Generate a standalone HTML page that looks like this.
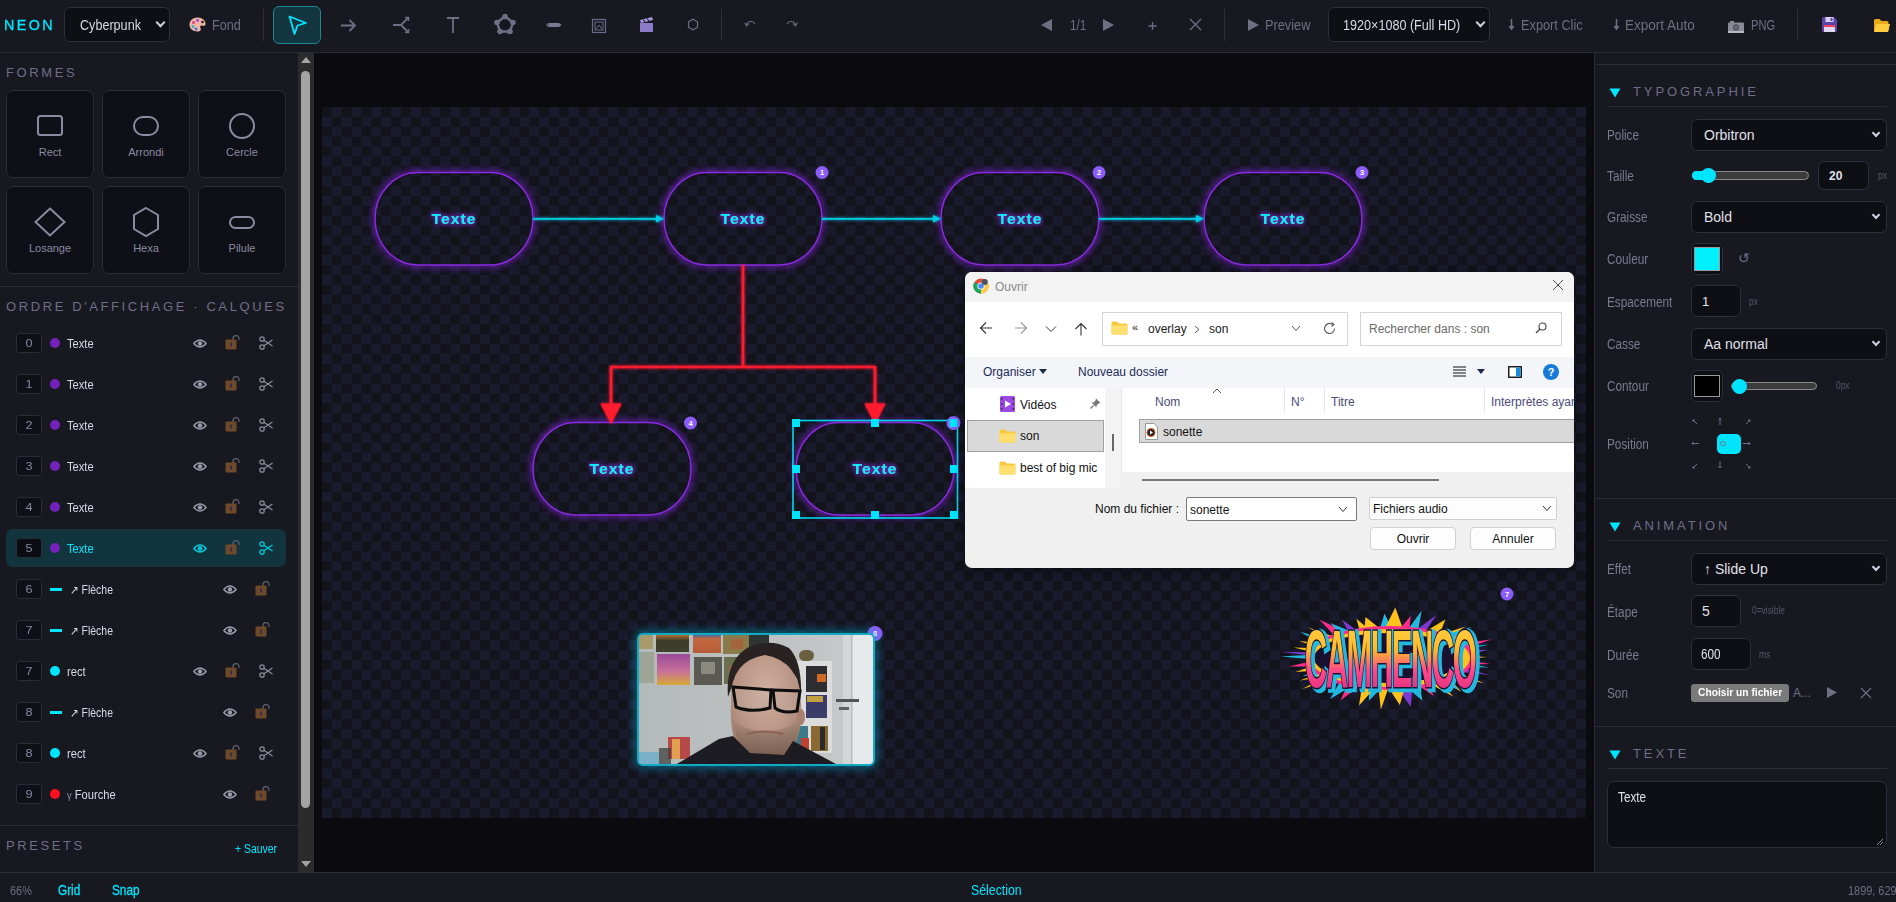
<!DOCTYPE html>
<html><head><meta charset="utf-8">
<style>
*{box-sizing:border-box;margin:0;padding:0}
html,body{width:1896px;height:902px;overflow:hidden;background:#17171f;font-family:"Liberation Sans",sans-serif;color:#c8c8d8}
.a{position:absolute}
svg{display:block}
#top{left:0;top:0;width:1896px;height:53px;background:#181820;border-bottom:1px solid #2a2a38}
.sep{position:absolute;width:1px;background:#2e2e3c}
.sel{position:absolute;background:#0e0e15;border:1px solid #2e2e3e;border-radius:6px}
.chev{position:absolute;width:7px;height:7px;border-right:2px solid #d0d0e0;border-bottom:2px solid #d0d0e0;transform:rotate(45deg)}
.t{position:absolute;white-space:nowrap;line-height:1}
.gray{color:#6e6e84}
.c2{transform:scaleX(1.0);transform-origin:left top}
.c3{display:inline-block;transform:scaleX(1.15);font-size:11px}
.c4{transform:scaleX(.93);transform-origin:left top}
.c{transform:scaleX(.84);transform-origin:left top}
#left{left:0;top:53px;width:298px;height:819px;background:#181820}
#sb{left:298px;top:53px;width:15px;height:819px;background:#2b2b2b}
#canvasArea{left:314px;top:53px;width:1280px;height:819px;background:#0a0a0f}
#board{left:322px;top:107px;width:1264px;height:711px;background:conic-gradient(#1a1a2d 25%,#13131c 0 50%,#1a1a2d 0 75%,#13131c 0) 0 0/19.75px 19.75px}
#right{left:1594px;top:53px;width:302px;height:819px;background:#181820;border-left:1px solid #2a2a38}
#status{left:0;top:872px;width:1896px;height:30px;background:#181820;border-top:1px solid #2a2a38}
.tile{position:absolute;width:88px;height:88px;background:#0f0f17;border:1px solid #2a2a38;border-radius:7px}
.tile span{position:absolute;left:0;width:100%;top:55px;text-align:center;font-size:11px;color:#8a8aa0}
.hdr{position:absolute;font-size:13px;letter-spacing:2.6px;color:#6e6e88;white-space:nowrap;line-height:1}
.row{position:absolute;left:6px;width:280px;height:38px}
.num{position:absolute;left:10px;top:9px;width:26px;height:20px;border:1px solid #2a2a38;border-radius:3px;background:#0f0f17;font-size:10px;color:#8888a0;text-align:center;line-height:18px}
.dot{position:absolute;left:44px;top:14px;width:10px;height:10px;border-radius:50%}
.lbl{position:absolute;left:61px;top:14px;font-size:12px;color:#d8d8e8;line-height:1;white-space:nowrap}
.lab{position:absolute;left:1607px;font-size:13px;color:#7a7a90;line-height:1;white-space:nowrap}
.inp{position:absolute;background:#0e0e15;border:1px solid #2e2e3e;border-radius:6px}
.pill{position:absolute;border:2px solid #8a2be2;border-radius:48px;box-shadow:0 0 8px rgba(138,43,226,.55),inset 0 0 6px rgba(138,43,226,.25)}
.pill b{position:absolute;left:0;right:0;top:37px;text-align:center;color:#00e5ff;font-size:15px;font-weight:bold;letter-spacing:1px;line-height:1;text-shadow:0 0 4px rgba(0,229,255,.6)}
.badge{position:absolute;width:13px;height:13px;border-radius:50%;background:#8f5cf0;color:#fff;font-size:7px;text-align:center;line-height:13px;font-weight:bold}
</style></head><body>
<!-- TOP BAR -->

<div id="top" class="a"></div>
<div class="t" style="left:4px;top:18px;font-size:14px;color:#00e5ff;letter-spacing:2.4px;-webkit-text-stroke:.35px #00e5ff;transform:scaleX(1.02);transform-origin:left">NEON</div>
<div class="sel" style="left:64px;top:7px;width:106px;height:35px"></div>
<div class="t c" style="left:80px;top:17px;font-size:15px;color:#d8d8e8">Cyberpunk</div>
<div class="chev" style="left:157px;top:19px"></div>
<svg class="a" style="left:189px;top:17px" width="17" height="15" viewBox="0 0 17 15"><path d="M8.5 0.5 C13.5 0.5 16.5 3.5 16.5 7 C16.5 9 14.5 9 13 8.5 C11.5 8 10.5 9.5 11.5 11 C12.5 13 11 14.5 8.5 14.5 C3.5 14.5 0.5 11.5 0.5 7.5 C0.5 3.5 4 0.5 8.5 0.5 Z" fill="#f2b4a4"/><circle cx="4.5" cy="5.5" r="1.5" fill="#e83a8a"/><circle cx="8.5" cy="3.3" r="1.5" fill="#a04ae0"/><circle cx="4" cy="9.5" r="1.5" fill="#3ab0c0"/><circle cx="7" cy="12" r="1.5" fill="#3a7ae0"/><circle cx="13.5" cy="5" r="1.3" fill="#222"/></svg>
<div class="t c gray" style="left:212px;top:17px;font-size:15px">Fond</div>
<div class="sep" style="left:263px;top:9px;height:32px"></div>
<div class="a" style="left:273px;top:6px;width:48px;height:38px;background:#133540;border:1px solid #1a8696;border-radius:6px"></div>
<svg class="a" style="left:286px;top:14px" width="24" height="24" viewBox="0 0 24 24"><path d="M3.5 2.5 L20 9 L11.5 11.5 L8.5 20 Z" fill="none" stroke="#00e5ff" stroke-width="1.8" stroke-linejoin="round"/></svg>
<svg class="a" style="left:338px;top:15px" width="22" height="22" viewBox="0 0 22 22"><path d="M3 10.5 H17 M11.5 5 L17 10.5 L11.5 16" fill="none" stroke="#6e6e84" stroke-width="1.8"/></svg>
<svg class="a" style="left:390px;top:14px" width="22" height="22" viewBox="0 0 22 22"><path d="M3 11 H11 M18 4 L11 11 L18 18" fill="none" stroke="#6e6e84" stroke-width="1.8"/><path d="M15 3.5 H18.5 V7 M15 18.5 H18.5 V15" fill="none" stroke="#6e6e84" stroke-width="1.5"/></svg>
<svg class="a" style="left:444px;top:14px" width="18" height="22" viewBox="0 0 18 22"><path d="M3 4 H15 M9 4 V19" fill="none" stroke="#6e6e84" stroke-width="1.8"/></svg>
<svg class="a" style="left:493px;top:13px" width="24" height="22" viewBox="0 0 24 22"><path d="M12 3.5 L20 9.5 L17 18.5 L7 18.5 L4 9.5 Z" fill="none" stroke="#6e6e84" stroke-width="2.4"/><circle cx="12" cy="3.5" r="2.8" fill="#6e6e84"/><circle cx="20" cy="9.5" r="2.8" fill="#6e6e84"/><circle cx="17" cy="18.5" r="2.8" fill="#6e6e84"/><circle cx="7" cy="18.5" r="2.8" fill="#6e6e84"/><circle cx="4" cy="9.5" r="2.8" fill="#6e6e84"/></svg>
<svg class="a" style="left:545px;top:21px" width="18" height="8" viewBox="0 0 18 8"><path d="M1 4 L3 2 H14 L16.5 4 L14 6 H3 Z" fill="#7a7a96"/><rect x="2.5" y="2" width="1.2" height="4" fill="#4a4a60"/></svg>
<svg class="a" style="left:591px;top:18px" width="16" height="16" viewBox="0 0 16 16"><rect x="1.5" y="1.5" width="13" height="13" fill="none" stroke="#6a6a88" stroke-width="1.2"/><rect x="4" y="4" width="8" height="8" fill="none" stroke="#6a6a88" stroke-width="1"/><path d="M5 11 L8 7 L11 11" fill="none" stroke="#6a6a88" stroke-width="1"/></svg>
<svg class="a" style="left:639px;top:16px" width="16" height="18" viewBox="0 0 16 18"><rect x="1" y="7" width="13" height="9" fill="#8a7ac8"/><path d="M1 4 L13 1 L14 4 L2 7 Z" fill="#a898e0"/><path d="M4 3.5 L6 6 M8 2.5 L10 5" stroke="#2a2a3a" stroke-width="1.2"/></svg>
<svg class="a" style="left:687px;top:18px" width="12" height="13" viewBox="0 0 12 13"><path d="M6 1.3 L10.5 3.8 V9.2 L6 11.7 L1.5 9.2 V3.8 Z" fill="none" stroke="#6e6e84" stroke-width="1.2"/></svg>
<div class="sep" style="left:721px;top:9px;height:32px"></div>
<svg class="a" style="left:744px;top:19px" width="12" height="8" viewBox="0 0 12 8"><path d="M2.5 6.5 A4.5 4.5 0 0 1 11 5" fill="none" stroke="#6e6e84" stroke-width="1.1"/><path d="M0.8 3.8 L2.5 6.8 L5 4.6" fill="none" stroke="#6e6e84" stroke-width="1.1"/></svg>
<svg class="a" style="left:786px;top:19px" width="12" height="8" viewBox="0 0 12 8"><path d="M9.5 6.5 A4.5 4.5 0 0 0 1 5" fill="none" stroke="#6e6e84" stroke-width="1.1"/><path d="M11.2 3.8 L9.5 6.8 L7 4.6" fill="none" stroke="#6e6e84" stroke-width="1.1"/></svg>

<svg class="a" style="left:1040px;top:18px" width="13" height="14" viewBox="0 0 13 14"><path d="M12 1 V13 L1 7 Z" fill="#6e6e84"/></svg>
<div class="t c gray" style="left:1070px;top:18px;font-size:14px">1/1</div>
<svg class="a" style="left:1102px;top:18px" width="13" height="14" viewBox="0 0 13 14"><path d="M1 1 V13 L12 7 Z" fill="#6e6e84"/></svg>
<svg class="a" style="left:1147px;top:21px" width="11" height="10" viewBox="0 0 11 10"><path d="M5.5 1 V9 M1.5 5 H9.5" stroke="#6e6e84" stroke-width="1.3"/></svg>
<svg class="a" style="left:1189px;top:18px" width="13" height="13" viewBox="0 0 13 13"><path d="M1 1 L12 12 M12 1 L1 12" stroke="#6e6e84" stroke-width="1.3"/></svg>
<div class="sep" style="left:1224px;top:9px;height:32px"></div>
<svg class="a" style="left:1247px;top:18px" width="13" height="14" viewBox="0 0 13 14"><path d="M1 1 V13 L12 7 Z" fill="#6e6e84"/></svg>
<div class="t gray" style="left:1265px;top:17px;font-size:15px;transform:scaleX(.85);transform-origin:left top">Preview</div>
<div class="sel" style="left:1328px;top:7px;width:162px;height:35px"></div>
<div class="t c" style="left:1343px;top:17px;font-size:15px;color:#d8d8e8">1920&#215;1080 (Full HD)</div>
<div class="chev" style="left:1477px;top:19px"></div>
<svg class="a" style="left:1508px;top:19px" width="7" height="12" viewBox="0 0 7 12"><path d="M3.5 0 V10" stroke="#6e6e84" stroke-width="1.6"/><path d="M0.5 7 L3.5 11.5 L6.5 7 Z" fill="#6e6e84"/></svg>
<div class="t gray" style="left:1521px;top:17px;font-size:15px;transform:scaleX(.85);transform-origin:left top">Export Clic</div>
<svg class="a" style="left:1613px;top:19px" width="7" height="12" viewBox="0 0 7 12"><path d="M3.5 0 V10" stroke="#6e6e84" stroke-width="1.6"/><path d="M0.5 7 L3.5 11.5 L6.5 7 Z" fill="#6e6e84"/></svg>
<div class="t gray" style="left:1625px;top:17px;font-size:15px;transform:scaleX(.9);transform-origin:left top">Export Auto</div>
<svg class="a" style="left:1728px;top:21px" width="16" height="12" viewBox="0 0 16 12"><rect x="0" y="1.5" width="16" height="10.5" rx="1" fill="#8a8a96"/><rect x="0" y="10" width="16" height="2" fill="#b8b8c4"/><rect x="2" y="0" width="4" height="2" fill="#8a8a96"/><circle cx="8" cy="6.5" r="3.2" fill="#55555f"/><circle cx="8" cy="6.5" r="1.8" fill="#70707a"/></svg>
<div class="t gray" style="left:1751px;top:17px;font-size:15px;transform:scaleX(.74);transform-origin:left top">PNG</div>
<div class="sep" style="left:1797px;top:9px;height:32px"></div>
<svg class="a" style="left:1822px;top:17px" width="15" height="15" viewBox="0 0 15 15"><path d="M0 1.5 Q0 0 1.5 0 H12 L15 3 V13.5 Q15 15 13.5 15 H1.5 Q0 15 0 13.5 Z" fill="#5a44a8"/><rect x="3.5" y="0" width="8" height="5" fill="#d8d0f0"/><rect x="8.5" y="1" width="2" height="3" fill="#5a44a8"/><rect x="2" y="8" width="11" height="7" fill="#e0d8f4"/><rect x="2" y="8" width="11" height="2" fill="#f04060"/></svg>
<svg class="a" style="left:1874px;top:19px" width="16" height="13" viewBox="0 0 16 13"><path d="M0 1.5 Q0 0 1.5 0 H5.5 L7.5 2 H13 Q14.5 2 14.5 3.5 V12 H0 Z" fill="#e8a818"/><path d="M2.5 5 H16 L14 13 H0 Z" fill="#ffcc40"/></svg>

<div id="leftp" ></div>
<div id="left" class="a"></div>
<div class="hdr c2" style="left:6px;top:66px">FORMES</div>
<div class="tile" style="left:6px;top:90px"><svg style="position:absolute;left:30px;top:24px;overflow:visible" width="26" height="22" viewBox="0 0 26 22"><rect x="1" y="1" width="24" height="19" rx="2.5" fill="none" stroke="#8a8aa0" stroke-width="2"/></svg><span>Rect</span></div>
<div class="tile" style="left:102px;top:90px"><svg style="position:absolute;left:30px;top:24px;overflow:visible" width="26" height="22" viewBox="0 0 26 22"><rect x="1" y="2" width="24" height="18" rx="9" fill="none" stroke="#8a8aa0" stroke-width="2"/></svg><span>Arrondi</span></div>
<div class="tile" style="left:198px;top:90px"><svg style="position:absolute;left:30px;top:24px;overflow:visible" width="26" height="22" viewBox="0 0 26 22"><circle cx="13" cy="11" r="12" fill="none" stroke="#8a8aa0" stroke-width="2"/></svg><span>Cercle</span></div>
<div class="tile" style="left:6px;top:186px"><svg style="position:absolute;left:30px;top:24px;overflow:visible" width="26" height="22" viewBox="0 0 26 22"><path d="M13 -2.5 L27.5 11 L13 24.5 L-1.5 11 Z" fill="none" stroke="#8a8aa0" stroke-width="2"/></svg><span>Losange</span></div>
<div class="tile" style="left:102px;top:186px"><svg style="position:absolute;left:30px;top:24px;overflow:visible" width="26" height="22" viewBox="0 0 26 22"><path d="M13 -3 L25 4 V18 L13 25 L1 18 V4 Z" fill="none" stroke="#8a8aa0" stroke-width="2"/></svg><span>Hexa</span></div>
<div class="tile" style="left:198px;top:186px"><svg style="position:absolute;left:30px;top:24px;overflow:visible" width="26" height="22" viewBox="0 0 26 22"><rect x="1" y="6" width="24" height="11" rx="5.5" fill="none" stroke="#8a8aa0" stroke-width="2"/></svg><span>Pilule</span></div>
<div class="a" style="left:0;top:286px;width:298px;height:1px;background:#2a2a38"></div>
<div class="hdr c2" style="left:6px;top:300px">ORDRE D'AFFICHAGE · CALQUES</div>
<div class="row" style="top:324px;"><div class="num" style=""><span class="c3">0</span></div><div class="dot" style="background:#7222b8"></div><div class="lbl c4" style="left:61px;color:#d8d8e8">Texte</div><div class="a" style="left:187px;top:15px"><svg width="14" height="9" viewBox="0 0 14 9"><path d="M0.8 4.5 Q7 -2.5 13.2 4.5 Q7 11.5 0.8 4.5 Z" fill="none" stroke="#9a9aac" stroke-width="1.3"/><circle cx="7" cy="4.5" r="2.2" fill="#9a9aac"/></svg></div><div class="a" style="left:219px;top:11px"><svg width="15" height="15" viewBox="0 0 15 15"><path d="M8 5 V3.5 A3 3 0 0 1 14 3.5 V5" fill="none" stroke="#5a5a68" stroke-width="1.4"/><rect x="0.5" y="4.5" width="11" height="10" rx="1" fill="#6e4a2a"/><rect x="5.3" y="7.5" width="1.6" height="4" fill="#2a2a50"/></svg></div><div class="a" style="left:253px;top:12px"><svg width="14" height="14" viewBox="0 0 14 14"><circle cx="3" cy="3" r="2.2" fill="none" stroke="#8a8a98" stroke-width="1.3"/><circle cx="3" cy="11" r="2.2" fill="none" stroke="#8a8a98" stroke-width="1.3"/><path d="M4.8 4.3 L13.5 10 M4.8 9.7 L13.5 4" stroke="#8a8a98" stroke-width="1.3"/></svg></div></div>
<div class="row" style="top:365px;"><div class="num" style=""><span class="c3">1</span></div><div class="dot" style="background:#7222b8"></div><div class="lbl c4" style="left:61px;color:#d8d8e8">Texte</div><div class="a" style="left:187px;top:15px"><svg width="14" height="9" viewBox="0 0 14 9"><path d="M0.8 4.5 Q7 -2.5 13.2 4.5 Q7 11.5 0.8 4.5 Z" fill="none" stroke="#9a9aac" stroke-width="1.3"/><circle cx="7" cy="4.5" r="2.2" fill="#9a9aac"/></svg></div><div class="a" style="left:219px;top:11px"><svg width="15" height="15" viewBox="0 0 15 15"><path d="M8 5 V3.5 A3 3 0 0 1 14 3.5 V5" fill="none" stroke="#5a5a68" stroke-width="1.4"/><rect x="0.5" y="4.5" width="11" height="10" rx="1" fill="#6e4a2a"/><rect x="5.3" y="7.5" width="1.6" height="4" fill="#2a2a50"/></svg></div><div class="a" style="left:253px;top:12px"><svg width="14" height="14" viewBox="0 0 14 14"><circle cx="3" cy="3" r="2.2" fill="none" stroke="#8a8a98" stroke-width="1.3"/><circle cx="3" cy="11" r="2.2" fill="none" stroke="#8a8a98" stroke-width="1.3"/><path d="M4.8 4.3 L13.5 10 M4.8 9.7 L13.5 4" stroke="#8a8a98" stroke-width="1.3"/></svg></div></div>
<div class="row" style="top:406px;"><div class="num" style=""><span class="c3">2</span></div><div class="dot" style="background:#7222b8"></div><div class="lbl c4" style="left:61px;color:#d8d8e8">Texte</div><div class="a" style="left:187px;top:15px"><svg width="14" height="9" viewBox="0 0 14 9"><path d="M0.8 4.5 Q7 -2.5 13.2 4.5 Q7 11.5 0.8 4.5 Z" fill="none" stroke="#9a9aac" stroke-width="1.3"/><circle cx="7" cy="4.5" r="2.2" fill="#9a9aac"/></svg></div><div class="a" style="left:219px;top:11px"><svg width="15" height="15" viewBox="0 0 15 15"><path d="M8 5 V3.5 A3 3 0 0 1 14 3.5 V5" fill="none" stroke="#5a5a68" stroke-width="1.4"/><rect x="0.5" y="4.5" width="11" height="10" rx="1" fill="#6e4a2a"/><rect x="5.3" y="7.5" width="1.6" height="4" fill="#2a2a50"/></svg></div><div class="a" style="left:253px;top:12px"><svg width="14" height="14" viewBox="0 0 14 14"><circle cx="3" cy="3" r="2.2" fill="none" stroke="#8a8a98" stroke-width="1.3"/><circle cx="3" cy="11" r="2.2" fill="none" stroke="#8a8a98" stroke-width="1.3"/><path d="M4.8 4.3 L13.5 10 M4.8 9.7 L13.5 4" stroke="#8a8a98" stroke-width="1.3"/></svg></div></div>
<div class="row" style="top:447px;"><div class="num" style=""><span class="c3">3</span></div><div class="dot" style="background:#7222b8"></div><div class="lbl c4" style="left:61px;color:#d8d8e8">Texte</div><div class="a" style="left:187px;top:15px"><svg width="14" height="9" viewBox="0 0 14 9"><path d="M0.8 4.5 Q7 -2.5 13.2 4.5 Q7 11.5 0.8 4.5 Z" fill="none" stroke="#9a9aac" stroke-width="1.3"/><circle cx="7" cy="4.5" r="2.2" fill="#9a9aac"/></svg></div><div class="a" style="left:219px;top:11px"><svg width="15" height="15" viewBox="0 0 15 15"><path d="M8 5 V3.5 A3 3 0 0 1 14 3.5 V5" fill="none" stroke="#5a5a68" stroke-width="1.4"/><rect x="0.5" y="4.5" width="11" height="10" rx="1" fill="#6e4a2a"/><rect x="5.3" y="7.5" width="1.6" height="4" fill="#2a2a50"/></svg></div><div class="a" style="left:253px;top:12px"><svg width="14" height="14" viewBox="0 0 14 14"><circle cx="3" cy="3" r="2.2" fill="none" stroke="#8a8a98" stroke-width="1.3"/><circle cx="3" cy="11" r="2.2" fill="none" stroke="#8a8a98" stroke-width="1.3"/><path d="M4.8 4.3 L13.5 10 M4.8 9.7 L13.5 4" stroke="#8a8a98" stroke-width="1.3"/></svg></div></div>
<div class="row" style="top:488px;"><div class="num" style=""><span class="c3">4</span></div><div class="dot" style="background:#7222b8"></div><div class="lbl c4" style="left:61px;color:#d8d8e8">Texte</div><div class="a" style="left:187px;top:15px"><svg width="14" height="9" viewBox="0 0 14 9"><path d="M0.8 4.5 Q7 -2.5 13.2 4.5 Q7 11.5 0.8 4.5 Z" fill="none" stroke="#9a9aac" stroke-width="1.3"/><circle cx="7" cy="4.5" r="2.2" fill="#9a9aac"/></svg></div><div class="a" style="left:219px;top:11px"><svg width="15" height="15" viewBox="0 0 15 15"><path d="M8 5 V3.5 A3 3 0 0 1 14 3.5 V5" fill="none" stroke="#5a5a68" stroke-width="1.4"/><rect x="0.5" y="4.5" width="11" height="10" rx="1" fill="#6e4a2a"/><rect x="5.3" y="7.5" width="1.6" height="4" fill="#2a2a50"/></svg></div><div class="a" style="left:253px;top:12px"><svg width="14" height="14" viewBox="0 0 14 14"><circle cx="3" cy="3" r="2.2" fill="none" stroke="#8a8a98" stroke-width="1.3"/><circle cx="3" cy="11" r="2.2" fill="none" stroke="#8a8a98" stroke-width="1.3"/><path d="M4.8 4.3 L13.5 10 M4.8 9.7 L13.5 4" stroke="#8a8a98" stroke-width="1.3"/></svg></div></div>
<div class="row" style="top:529px;background:#12343e;border-radius:7px;"><div class="num" style="background:#0c0c13;border-color:#22303a;"><span class="c3">5</span></div><div class="dot" style="background:#7222b8"></div><div class="lbl c4" style="left:61px;color:#00e5ff">Texte</div><div class="a" style="left:187px;top:15px"><svg width="14" height="9" viewBox="0 0 14 9"><path d="M0.8 4.5 Q7 -2.5 13.2 4.5 Q7 11.5 0.8 4.5 Z" fill="none" stroke="#00c8d8" stroke-width="1.3"/><circle cx="7" cy="4.5" r="2.2" fill="#00c8d8"/></svg></div><div class="a" style="left:219px;top:11px"><svg width="15" height="15" viewBox="0 0 15 15"><path d="M8 5 V3.5 A3 3 0 0 1 14 3.5 V5" fill="none" stroke="#5a5a68" stroke-width="1.4"/><rect x="0.5" y="4.5" width="11" height="10" rx="1" fill="#6e4a2a"/><rect x="5.3" y="7.5" width="1.6" height="4" fill="#2a2a50"/></svg></div><div class="a" style="left:253px;top:12px"><svg width="14" height="14" viewBox="0 0 14 14"><circle cx="3" cy="3" r="2.2" fill="none" stroke="#00c8d8" stroke-width="1.3"/><circle cx="3" cy="11" r="2.2" fill="none" stroke="#00c8d8" stroke-width="1.3"/><path d="M4.8 4.3 L13.5 10 M4.8 9.7 L13.5 4" stroke="#00c8d8" stroke-width="1.3"/></svg></div></div>
<div class="row" style="top:570px;"><div class="num" style=""><span class="c3">6</span></div><div class="a" style="left:44px;top:18px;width:12px;height:3px;background:#00e5ff"></div><div class="lbl c4" style="transform:scaleX(.87);left:64px;color:#d8d8e8">&#8599; Flèche</div><div class="a" style="left:217px;top:15px"><svg width="14" height="9" viewBox="0 0 14 9"><path d="M0.8 4.5 Q7 -2.5 13.2 4.5 Q7 11.5 0.8 4.5 Z" fill="none" stroke="#9a9aac" stroke-width="1.3"/><circle cx="7" cy="4.5" r="2.2" fill="#9a9aac"/></svg></div><div class="a" style="left:249px;top:11px"><svg width="15" height="15" viewBox="0 0 15 15"><path d="M8 5 V3.5 A3 3 0 0 1 14 3.5 V5" fill="none" stroke="#5a5a68" stroke-width="1.4"/><rect x="0.5" y="4.5" width="11" height="10" rx="1" fill="#6e4a2a"/><rect x="5.3" y="7.5" width="1.6" height="4" fill="#2a2a50"/></svg></div></div>
<div class="row" style="top:611px;"><div class="num" style=""><span class="c3">7</span></div><div class="a" style="left:44px;top:18px;width:12px;height:3px;background:#00e5ff"></div><div class="lbl c4" style="transform:scaleX(.87);left:64px;color:#d8d8e8">&#8599; Flèche</div><div class="a" style="left:217px;top:15px"><svg width="14" height="9" viewBox="0 0 14 9"><path d="M0.8 4.5 Q7 -2.5 13.2 4.5 Q7 11.5 0.8 4.5 Z" fill="none" stroke="#9a9aac" stroke-width="1.3"/><circle cx="7" cy="4.5" r="2.2" fill="#9a9aac"/></svg></div><div class="a" style="left:249px;top:11px"><svg width="15" height="15" viewBox="0 0 15 15"><path d="M8 5 V3.5 A3 3 0 0 1 14 3.5 V5" fill="none" stroke="#5a5a68" stroke-width="1.4"/><rect x="0.5" y="4.5" width="11" height="10" rx="1" fill="#6e4a2a"/><rect x="5.3" y="7.5" width="1.6" height="4" fill="#2a2a50"/></svg></div></div>
<div class="row" style="top:652px;"><div class="num" style=""><span class="c3">7</span></div><div class="dot" style="background:#00e5ff"></div><div class="lbl c4" style="left:61px;color:#d8d8e8">rect</div><div class="a" style="left:187px;top:15px"><svg width="14" height="9" viewBox="0 0 14 9"><path d="M0.8 4.5 Q7 -2.5 13.2 4.5 Q7 11.5 0.8 4.5 Z" fill="none" stroke="#9a9aac" stroke-width="1.3"/><circle cx="7" cy="4.5" r="2.2" fill="#9a9aac"/></svg></div><div class="a" style="left:219px;top:11px"><svg width="15" height="15" viewBox="0 0 15 15"><path d="M8 5 V3.5 A3 3 0 0 1 14 3.5 V5" fill="none" stroke="#5a5a68" stroke-width="1.4"/><rect x="0.5" y="4.5" width="11" height="10" rx="1" fill="#6e4a2a"/><rect x="5.3" y="7.5" width="1.6" height="4" fill="#2a2a50"/></svg></div><div class="a" style="left:253px;top:12px"><svg width="14" height="14" viewBox="0 0 14 14"><circle cx="3" cy="3" r="2.2" fill="none" stroke="#8a8a98" stroke-width="1.3"/><circle cx="3" cy="11" r="2.2" fill="none" stroke="#8a8a98" stroke-width="1.3"/><path d="M4.8 4.3 L13.5 10 M4.8 9.7 L13.5 4" stroke="#8a8a98" stroke-width="1.3"/></svg></div></div>
<div class="row" style="top:693px;"><div class="num" style=""><span class="c3">8</span></div><div class="a" style="left:44px;top:18px;width:12px;height:3px;background:#00e5ff"></div><div class="lbl c4" style="transform:scaleX(.87);left:64px;color:#d8d8e8">&#8599; Flèche</div><div class="a" style="left:217px;top:15px"><svg width="14" height="9" viewBox="0 0 14 9"><path d="M0.8 4.5 Q7 -2.5 13.2 4.5 Q7 11.5 0.8 4.5 Z" fill="none" stroke="#9a9aac" stroke-width="1.3"/><circle cx="7" cy="4.5" r="2.2" fill="#9a9aac"/></svg></div><div class="a" style="left:249px;top:11px"><svg width="15" height="15" viewBox="0 0 15 15"><path d="M8 5 V3.5 A3 3 0 0 1 14 3.5 V5" fill="none" stroke="#5a5a68" stroke-width="1.4"/><rect x="0.5" y="4.5" width="11" height="10" rx="1" fill="#6e4a2a"/><rect x="5.3" y="7.5" width="1.6" height="4" fill="#2a2a50"/></svg></div></div>
<div class="row" style="top:734px;"><div class="num" style=""><span class="c3">8</span></div><div class="dot" style="background:#00e5ff"></div><div class="lbl c4" style="left:61px;color:#d8d8e8">rect</div><div class="a" style="left:187px;top:15px"><svg width="14" height="9" viewBox="0 0 14 9"><path d="M0.8 4.5 Q7 -2.5 13.2 4.5 Q7 11.5 0.8 4.5 Z" fill="none" stroke="#9a9aac" stroke-width="1.3"/><circle cx="7" cy="4.5" r="2.2" fill="#9a9aac"/></svg></div><div class="a" style="left:219px;top:11px"><svg width="15" height="15" viewBox="0 0 15 15"><path d="M8 5 V3.5 A3 3 0 0 1 14 3.5 V5" fill="none" stroke="#5a5a68" stroke-width="1.4"/><rect x="0.5" y="4.5" width="11" height="10" rx="1" fill="#6e4a2a"/><rect x="5.3" y="7.5" width="1.6" height="4" fill="#2a2a50"/></svg></div><div class="a" style="left:253px;top:12px"><svg width="14" height="14" viewBox="0 0 14 14"><circle cx="3" cy="3" r="2.2" fill="none" stroke="#8a8a98" stroke-width="1.3"/><circle cx="3" cy="11" r="2.2" fill="none" stroke="#8a8a98" stroke-width="1.3"/><path d="M4.8 4.3 L13.5 10 M4.8 9.7 L13.5 4" stroke="#8a8a98" stroke-width="1.3"/></svg></div></div>
<div class="row" style="top:775px;"><div class="num" style=""><span class="c3">9</span></div><div class="dot" style="background:#ff1020"></div><div class="lbl c4" style="left:61px;color:#d8d8e8"><span style="font-size:10px;color:#8a8aa0">&#947;</span> Fourche</div><div class="a" style="left:217px;top:15px"><svg width="14" height="9" viewBox="0 0 14 9"><path d="M0.8 4.5 Q7 -2.5 13.2 4.5 Q7 11.5 0.8 4.5 Z" fill="none" stroke="#9a9aac" stroke-width="1.3"/><circle cx="7" cy="4.5" r="2.2" fill="#9a9aac"/></svg></div><div class="a" style="left:249px;top:11px"><svg width="15" height="15" viewBox="0 0 15 15"><path d="M8 5 V3.5 A3 3 0 0 1 14 3.5 V5" fill="none" stroke="#5a5a68" stroke-width="1.4"/><rect x="0.5" y="4.5" width="11" height="10" rx="1" fill="#6e4a2a"/><rect x="5.3" y="7.5" width="1.6" height="4" fill="#2a2a50"/></svg></div></div>
<div class="a" style="left:0;top:825px;width:298px;height:1px;background:#2a2a38"></div>
<div class="hdr c2" style="left:6px;top:839px">PRESETS</div>
<div class="t" style="left:235px;top:843px;font-size:12px;color:#00e5ff;transform:scaleX(.87);transform-origin:left top">+ Sauver</div>
<div id="sb" class="a"></div>
<div class="a" style="left:301px;top:57px;width:0;height:0;border-left:5px solid transparent;border-right:5px solid transparent;border-bottom:6px solid #a3a3a3"></div>
<div class="a" style="left:301px;top:71px;width:9px;height:737px;background:#a3a3a3;border-radius:5px"></div>
<div class="a" style="left:301px;top:861px;width:0;height:0;border-left:5px solid transparent;border-right:5px solid transparent;border-top:6px solid #a3a3a3"></div>
<div class="a" style="left:313px;top:53px;width:1px;height:819px;background:#2a2a38"></div>
<div id="canvasArea" class="a"></div>
<div id="board" class="a"></div>
<svg class="a" style="left:0;top:0" width="1896" height="902" viewBox="0 0 1896 902">
<defs>
<filter id="gp" x="-30%" y="-30%" width="160%" height="160%"><feMorphology in="SourceGraphic" operator="dilate" radius="1" result="d"/><feGaussianBlur in="d" stdDeviation="3.5" result="b"/><feComponentTransfer in="b" result="b2"><feFuncA type="linear" slope="1.1"/></feComponentTransfer><feMerge><feMergeNode in="b2"/><feMergeNode in="SourceGraphic"/></feMerge></filter>
<filter id="gt" x="-30%" y="-50%" width="160%" height="200%"><feMorphology in="SourceAlpha" operator="dilate" radius="1" result="d"/><feGaussianBlur in="d" stdDeviation="2" result="b"/><feFlood flood-color="#8a2be2" flood-opacity=".7"/><feComposite in2="b" operator="in" result="g"/><feMerge><feMergeNode in="g"/><feMergeNode in="SourceGraphic"/></feMerge></filter>
<filter id="bl" x="-20%" y="-30%" width="140%" height="160%"><feGaussianBlur stdDeviation="3"/></filter>
<filter id="gc" x="-30%" y="-30%" width="160%" height="160%"><feGaussianBlur stdDeviation="1.5" result="b"/><feMerge><feMergeNode in="b"/><feMergeNode in="SourceGraphic"/></feMerge></filter>
</defs>
<mask id="mo0" maskUnits="userSpaceOnUse" x="0" y="0" width="1896" height="902"><rect x="0" y="0" width="1896" height="902" fill="#fff"/><rect x="375" y="172.5" width="158" height="92.5" rx="43" ry="46.5" fill="#000"/></mask><rect x="375" y="172.5" width="158" height="92.5" rx="43" ry="46.5" fill="none" stroke="#7a22d0" stroke-width="5" filter="url(#bl)" mask="url(#mo0)" opacity=".75"/><rect x="375" y="172.5" width="158" height="92.5" rx="43" ry="46.5" fill="none" stroke="#8a2ae0" stroke-width="1.5"/>
<text x="454" y="224.5" text-anchor="middle" font-family="Liberation Sans" font-weight="bold" font-size="14.5" letter-spacing="1" fill="#00f0ff" filter="url(#gt)" transform="translate(454 0) scale(1.08 1) translate(-454 0)">Texte</text>
<mask id="mo1" maskUnits="userSpaceOnUse" x="0" y="0" width="1896" height="902"><rect x="0" y="0" width="1896" height="902" fill="#fff"/><rect x="664" y="172.5" width="158" height="92.5" rx="43" ry="46.5" fill="#000"/></mask><rect x="664" y="172.5" width="158" height="92.5" rx="43" ry="46.5" fill="none" stroke="#7a22d0" stroke-width="5" filter="url(#bl)" mask="url(#mo1)" opacity=".75"/><rect x="664" y="172.5" width="158" height="92.5" rx="43" ry="46.5" fill="none" stroke="#8a2ae0" stroke-width="1.5"/>
<text x="743" y="224.5" text-anchor="middle" font-family="Liberation Sans" font-weight="bold" font-size="14.5" letter-spacing="1" fill="#00f0ff" filter="url(#gt)" transform="translate(743 0) scale(1.08 1) translate(-743 0)">Texte</text>
<mask id="mo2" maskUnits="userSpaceOnUse" x="0" y="0" width="1896" height="902"><rect x="0" y="0" width="1896" height="902" fill="#fff"/><rect x="941" y="172.5" width="158" height="92.5" rx="43" ry="46.5" fill="#000"/></mask><rect x="941" y="172.5" width="158" height="92.5" rx="43" ry="46.5" fill="none" stroke="#7a22d0" stroke-width="5" filter="url(#bl)" mask="url(#mo2)" opacity=".75"/><rect x="941" y="172.5" width="158" height="92.5" rx="43" ry="46.5" fill="none" stroke="#8a2ae0" stroke-width="1.5"/>
<text x="1020" y="224.5" text-anchor="middle" font-family="Liberation Sans" font-weight="bold" font-size="14.5" letter-spacing="1" fill="#00f0ff" filter="url(#gt)" transform="translate(1020 0) scale(1.08 1) translate(-1020 0)">Texte</text>
<mask id="mo3" maskUnits="userSpaceOnUse" x="0" y="0" width="1896" height="902"><rect x="0" y="0" width="1896" height="902" fill="#fff"/><rect x="1204" y="172.5" width="158" height="92.5" rx="43" ry="46.5" fill="#000"/></mask><rect x="1204" y="172.5" width="158" height="92.5" rx="43" ry="46.5" fill="none" stroke="#7a22d0" stroke-width="5" filter="url(#bl)" mask="url(#mo3)" opacity=".75"/><rect x="1204" y="172.5" width="158" height="92.5" rx="43" ry="46.5" fill="none" stroke="#8a2ae0" stroke-width="1.5"/>
<text x="1283" y="224.5" text-anchor="middle" font-family="Liberation Sans" font-weight="bold" font-size="14.5" letter-spacing="1" fill="#00f0ff" filter="url(#gt)" transform="translate(1283 0) scale(1.08 1) translate(-1283 0)">Texte</text>
<mask id="mo4" maskUnits="userSpaceOnUse" x="0" y="0" width="1896" height="902"><rect x="0" y="0" width="1896" height="902" fill="#fff"/><rect x="533" y="422.5" width="158" height="92.5" rx="43" ry="46.5" fill="#000"/></mask><rect x="533" y="422.5" width="158" height="92.5" rx="43" ry="46.5" fill="none" stroke="#7a22d0" stroke-width="5" filter="url(#bl)" mask="url(#mo4)" opacity=".75"/><rect x="533" y="422.5" width="158" height="92.5" rx="43" ry="46.5" fill="none" stroke="#8a2ae0" stroke-width="1.5"/>
<text x="612" y="474.5" text-anchor="middle" font-family="Liberation Sans" font-weight="bold" font-size="14.5" letter-spacing="1" fill="#00f0ff" filter="url(#gt)" transform="translate(612 0) scale(1.08 1) translate(-612 0)">Texte</text>
<mask id="mo5" maskUnits="userSpaceOnUse" x="0" y="0" width="1896" height="902"><rect x="0" y="0" width="1896" height="902" fill="#fff"/><rect x="796" y="422.5" width="158" height="92.5" rx="43" ry="46.5" fill="#000"/></mask><rect x="796" y="422.5" width="158" height="92.5" rx="43" ry="46.5" fill="none" stroke="#7a22d0" stroke-width="5" filter="url(#bl)" mask="url(#mo5)" opacity=".75"/><rect x="796" y="422.5" width="158" height="92.5" rx="43" ry="46.5" fill="none" stroke="#8a2ae0" stroke-width="1.5"/>
<text x="875" y="474.5" text-anchor="middle" font-family="Liberation Sans" font-weight="bold" font-size="14.5" letter-spacing="1" fill="#00f0ff" filter="url(#gt)" transform="translate(875 0) scale(1.08 1) translate(-875 0)">Texte</text>
<g filter="url(#gc)"><line x1="533" y1="218.8" x2="658" y2="218.8" stroke="#00cce4" stroke-width="1.8"/><path d="M656 215 L664 218.8 L656 222.6 Z" fill="#00cce4"/></g>
<g filter="url(#gc)"><line x1="822" y1="218.8" x2="935" y2="218.8" stroke="#00cce4" stroke-width="1.8"/><path d="M933 215 L941 218.8 L933 222.6 Z" fill="#00cce4"/></g>
<g filter="url(#gc)"><line x1="1099" y1="218.8" x2="1198" y2="218.8" stroke="#00cce4" stroke-width="1.8"/><path d="M1196 215 L1204 218.8 L1196 222.6 Z" fill="#00cce4"/></g>
<g filter="url(#gc)"><path d="M743 265 V367 M611 367 H875 M611 366 V406 M875 366 V406" fill="none" stroke="#ff1a2e" stroke-width="2.6"/><path d="M600.5 403.5 L621.5 403.5 L611 424 Z M864.5 403.5 L885.5 403.5 L875 424 Z" fill="#ff1a2e"/></g>
<rect x="793" y="420.5" width="164.5" height="97.5" fill="none" stroke="#00d8f0" stroke-width="1.6"/>
<rect x="792" y="419" width="8" height="8" fill="#00e5ff"/>
<rect x="871" y="419" width="8" height="8" fill="#00e5ff"/>
<rect x="792" y="465" width="8" height="8" fill="#00e5ff"/>
<rect x="950" y="465" width="8" height="8" fill="#00e5ff"/>
<rect x="792" y="511" width="8" height="8" fill="#00e5ff"/>
<rect x="871" y="511" width="8" height="8" fill="#00e5ff"/>
<rect x="950" y="511" width="8" height="8" fill="#00e5ff"/>
<circle cx="822" cy="172.5" r="6.5" fill="#8b5cf6"/><text x="822" y="175.1" text-anchor="middle" font-family="Liberation Sans" font-weight="bold" font-size="7.5" fill="#fff">1</text>
<circle cx="1099" cy="172.5" r="6.5" fill="#8b5cf6"/><text x="1099" y="175.1" text-anchor="middle" font-family="Liberation Sans" font-weight="bold" font-size="7.5" fill="#fff">2</text>
<circle cx="1362" cy="172.5" r="6.5" fill="#8b5cf6"/><text x="1362" y="175.1" text-anchor="middle" font-family="Liberation Sans" font-weight="bold" font-size="7.5" fill="#fff">3</text>
<circle cx="690.5" cy="423" r="6.5" fill="#8b5cf6"/><text x="690.5" y="425.6" text-anchor="middle" font-family="Liberation Sans" font-weight="bold" font-size="7.5" fill="#fff">4</text>
<circle cx="875" cy="633.5" r="7.5" fill="#8b5cf6"/><text x="875" y="636.1" text-anchor="middle" font-family="Liberation Sans" font-weight="bold" font-size="7.5" fill="#fff">8</text>
<circle cx="1507" cy="594" r="6.5" fill="#8b5cf6"/><text x="1507" y="596.6" text-anchor="middle" font-family="Liberation Sans" font-weight="bold" font-size="7.5" fill="#fff">7</text>
<circle cx="953.5" cy="423" r="7" fill="#8b5cf6"/><rect x="949.5" y="419" width="8" height="8" fill="#00e5ff"/>
</svg>
<div class="a" style="left:637px;top:633px;width:238px;height:133px;border:2px solid #12aac4;border-radius:6px;box-shadow:0 0 9px 3px rgba(0,170,210,.45);overflow:hidden;background:#b0b4b6">
<svg width="234" height="129" viewBox="0 0 234 129">
<defs><linearGradient id="wall" x1="0" x2="1"><stop offset="0" stop-color="#b4b9ba"/><stop offset=".6" stop-color="#bec2c3"/><stop offset="1" stop-color="#c8cbcc"/></linearGradient>
<linearGradient id="fred" x1="0" y1="0" x2="0" y2="1"><stop offset="0" stop-color="#9a4a9a"/><stop offset=".55" stop-color="#c8709a"/><stop offset="1" stop-color="#d8a838"/></linearGradient>
<linearGradient id="p2" x1="0" y1="0" x2="0" y2="1"><stop offset="0" stop-color="#b07030"/><stop offset=".35" stop-color="#3a3a28"/><stop offset="1" stop-color="#404030"/></linearGradient>
<linearGradient id="p3" x1="0" y1="0" x2="0" y2="1"><stop offset="0" stop-color="#4a6a9a"/><stop offset=".2" stop-color="#c06a40"/><stop offset="1" stop-color="#b85a38"/></linearGradient>
<radialGradient id="skin" cx=".5" cy=".35" r=".7"><stop offset="0" stop-color="#d0b0a0"/><stop offset=".6" stop-color="#b89484"/><stop offset="1" stop-color="#9a7868"/></radialGradient>
<linearGradient id="beard" x1="0" y1="0" x2="0" y2="1"><stop offset="0" stop-color="#a08070" stop-opacity="0"/><stop offset=".4" stop-color="#8a7060" stop-opacity=".7"/><stop offset="1" stop-color="#6a5448" stop-opacity=".8"/></linearGradient>
<filter id="soft"><feGaussianBlur stdDeviation=".45"/></filter></defs>
<g filter="url(#soft)">
<rect width="234" height="129" fill="url(#wall)"/>
<rect x="0" y="0" width="14" height="14" fill="#a89a6a"/>
<rect x="17" y="0" width="33" height="17" fill="url(#p2)"/>
<rect x="54" y="0" width="28" height="18" fill="url(#p3)"/>
<rect x="84" y="0" width="26" height="19" fill="#8a7a48"/>
<rect x="92" y="4" width="12" height="10" fill="#b05a3a" opacity=".7"/>
<rect x="110" y="0" width="20" height="15" fill="#2e3434"/>
<rect x="0" y="17" width="15" height="31" fill="#9ea496"/>
<rect x="18" y="19" width="33" height="31" fill="url(#fred)"/>
<rect x="55" y="22" width="28" height="28" fill="#5a5a52"/>
<rect x="62" y="27" width="14" height="12" fill="#8a8a80"/>
<rect x="85" y="22" width="20" height="27" fill="#6a7050"/>
<rect x="90" y="30" width="10" height="12" fill="#a06040" opacity=".8"/>
<rect x="204" y="0" width="30" height="129" fill="#e6e8ea"/>
<rect x="204" y="0" width="8" height="129" fill="#d4d6d8"/>
<rect x="212" y="0" width="1.5" height="129" fill="#b8babc"/>
<rect x="197" y="64" width="23" height="3" fill="#505456"/>
<rect x="200" y="72" width="10" height="3" fill="#606466"/>
<rect x="153" y="26" width="40" height="92" fill="#dcdcdc"/>
<rect x="160" y="15" width="15" height="11" rx="6" fill="#6a6040"/>
<rect x="167" y="31" width="21" height="26" fill="#2e2e30"/>
<rect x="178" y="39" width="9" height="8" fill="#d06a20"/>
<rect x="167" y="60" width="21" height="23" fill="#3a3a6a"/>
<rect x="168" y="61" width="16" height="6" fill="#c0a040"/>
<rect x="155" y="91" width="14" height="25" fill="#3a7a8a"/>
<rect x="162" y="103" width="8" height="12" fill="#c04030"/>
<rect x="172" y="91" width="17" height="25" fill="#8a6a30"/>
<rect x="181" y="92" width="5" height="23" fill="#2a2a2a"/>
<rect x="29" y="102" width="22" height="22" fill="#b84a4a"/>
<rect x="33" y="104" width="8" height="20" fill="#e0a050"/>
<rect x="0" y="117" width="20" height="12" fill="#7ab0c8"/>
<rect x="20" y="113" width="12" height="16" fill="#3a3a3a" opacity=".7"/>
<path d="M89 62 Q86 25 110 12 Q131 3 150 13 Q163 26 162 60 L158 44 Q148 26 126 24 Q104 26 95 46 Z" fill="#2a2420"/>
<path d="M92 68 Q90 26 126 20 Q161 26 162 68 Q164 100 152 116 Q136 128 118 126 Q100 120 94 100 Q91 86 92 68 Z" fill="url(#skin)"/><ellipse cx="162" cy="82" rx="4" ry="8" fill="#a88070"/>
<path d="M93 82 Q95 102 106 118 Q124 128 150 118 Q162 102 161 82 Q150 96 126 96 Q104 96 93 82 Z" fill="url(#beard)"/>
<path d="M108 99 Q126 94 144 99" fill="none" stroke="#8a6050" stroke-width="2"/>
<path d="M94 52 L132 55 L131 73 Q112 78 97 72 Z" fill="rgba(200,180,170,.25)" stroke="#111" stroke-width="3"/>
<path d="M134 55 L161 56 L158 76 Q144 79 136 73 Z" fill="rgba(200,180,170,.25)" stroke="#111" stroke-width="3"/>
<path d="M0 129 L0 129 L38 129 L94 101 L111 118 L145 120 L154 106 L197 129 Z" fill="#1c1c20"/>
<path d="M80 104 L94 101 L60 129 L38 129 Z" fill="#1c1c20"/>
</g>
</svg></div>
<svg class="a" style="left:1280px;top:600px" width="230" height="115" viewBox="0 0 230 115">
<defs><linearGradient id="lg" x1="0" y1="0" x2="0" y2="1"><stop offset="0" stop-color="#ffd84a"/><stop offset=".4" stop-color="#ffb82a"/><stop offset=".62" stop-color="#ff4a8a"/><stop offset="1" stop-color="#d0207a"/></linearGradient></defs>
<path d="M179.7 55.4 L207.5 57.1 L179.9 59.6 Z" fill="#ffc21a"/><path d="M180.0 59.0 L210.2 63.9 L177.9 64.8 Z" fill="#ff2d8a"/><path d="M179.2 62.2 L209.7 67.6 L176.8 66.4 Z" fill="#22b8e0"/><path d="M176.5 66.7 L210.4 74.9 L171.8 71.1 Z" fill="#7a3ad0"/><path d="M172.7 70.5 L204.2 83.3 L165.4 75.1 Z" fill="#ffc21a"/><path d="M166.1 74.7 L181.3 91.8 L157.7 78.5 Z" fill="#ffc21a"/><path d="M165.4 75.1 L178.7 89.8 L152.9 80.1 Z" fill="#22b8e0"/><path d="M157.3 78.6 L173.2 96.6 L146.6 81.9 Z" fill="#ffc21a"/><path d="M147.0 81.8 L153.8 95.9 L136.5 83.9 Z" fill="#ff2d8a"/><path d="M139.5 83.4 L142.5 100.8 L124.8 85.4 Z" fill="#22b8e0"/><path d="M132.6 84.5 L130.8 106.9 L116.3 85.9 Z" fill="#7a3ad0"/><path d="M125.6 85.3 L119.8 105.0 L107.4 86.0 Z" fill="#ffc21a"/><path d="M109.1 86.0 L100.9 109.6 L98.2 85.6 Z" fill="#ffc21a"/><path d="M103.5 85.9 L88.9 100.7 L89.3 84.7 Z" fill="#22b8e0"/><path d="M97.1 85.5 L79.0 105.5 L82.4 83.7 Z" fill="#ffc21a"/><path d="M82.5 83.7 L60.5 100.6 L68.9 80.7 Z" fill="#ff2d8a"/><path d="M77.3 82.8 L50.1 98.9 L61.8 78.3 Z" fill="#22b8e0"/><path d="M68.8 80.6 L37.7 89.2 L56.6 76.1 Z" fill="#7a3ad0"/><path d="M59.2 77.3 L22.2 89.1 L51.4 73.3 Z" fill="#ffc21a"/><path d="M54.7 75.2 L19.8 80.4 L47.1 70.3 Z" fill="#ffc21a"/><path d="M50.9 73.0 L22.4 76.3 L43.5 66.8 Z" fill="#22b8e0"/><path d="M46.7 70.0 L15.5 72.0 L41.1 63.0 Z" fill="#ffc21a"/><path d="M43.3 66.6 L9.0 66.4 L40.1 59.3 Z" fill="#ff2d8a"/><path d="M40.2 59.9 L0.4 56.6 L40.6 54.3 Z" fill="#22b8e0"/><path d="M40.1 56.8 L0.8 51.7 L41.4 52.4 Z" fill="#7a3ad0"/><path d="M40.7 54.2 L13.9 47.4 L44.1 48.5 Z" fill="#ffc21a"/><path d="M43.5 49.2 L19.1 40.9 L49.2 44.1 Z" fill="#ffc21a"/><path d="M45.9 46.7 L19.9 31.8 L54.3 41.0 Z" fill="#22b8e0"/><path d="M52.7 41.9 L28.3 27.2 L59.2 38.7 Z" fill="#ffc21a"/><path d="M58.0 39.3 L39.3 19.6 L71.3 34.7 Z" fill="#ff2d8a"/><path d="M62.8 37.3 L50.4 23.1 L75.8 33.6 Z" fill="#22b8e0"/><path d="M70.3 34.9 L62.1 19.8 L80.2 32.7 Z" fill="#7a3ad0"/><path d="M80.3 32.6 L76.4 18.7 L90.9 31.1 Z" fill="#ffc21a"/><path d="M84.3 32.0 L85.5 17.0 L102.1 30.2 Z" fill="#ffc21a"/><path d="M99.5 30.3 L104.5 13.5 L112.6 30.0 Z" fill="#22b8e0"/><path d="M104.1 30.1 L115.3 7.6 L123.5 30.5 Z" fill="#ffc21a"/><path d="M118.7 30.2 L130.7 16.0 L129.3 31.1 Z" fill="#ff2d8a"/><path d="M126.9 30.8 L141.8 10.4 L137.7 32.3 Z" fill="#22b8e0"/><path d="M134.0 31.7 L156.4 15.0 L144.2 33.6 Z" fill="#7a3ad0"/><path d="M142.4 33.2 L165.4 19.5 L158.1 37.7 Z" fill="#ffc21a"/><path d="M154.7 36.4 L185.7 26.5 L164.1 40.2 Z" fill="#ffc21a"/><path d="M156.7 37.1 L191.6 26.9 L168.1 42.4 Z" fill="#22b8e0"/><path d="M163.4 39.9 L193.5 31.2 L173.8 46.5 Z" fill="#ffc21a"/><path d="M171.6 44.7 L211.2 39.6 L177.8 51.0 Z" fill="#ff2d8a"/><path d="M175.2 47.8 L209.1 44.5 L178.2 51.7 Z" fill="#22b8e0"/><path d="M176.8 49.7 L208.1 49.9 L179.9 56.2 Z" fill="#7a3ad0"/>
<ellipse cx="110" cy="58" rx="84" ry="32" fill="#ff2d8a"/><ellipse cx="110" cy="58" rx="80" ry="29" fill="#ffc21a"/>
<ellipse cx="108" cy="58" rx="74" ry="25" fill="#1a1030"/><g transform="translate(113 89) scale(1.0 2.6)"><text x="0" y="0" text-anchor="middle" font-family="Liberation Sans" font-weight="bold" font-size="31" letter-spacing="-1.5" fill="#22b8e0" stroke="#22b8e0" stroke-width="2.5">CAMHENCO</text></g>
<g transform="translate(110 87) scale(1.0 2.6)"><text x="0" y="0" text-anchor="middle" font-family="Liberation Sans" font-weight="bold" font-size="31" letter-spacing="-1.5" fill="url(#lg)" stroke="#1a1030" stroke-width="1.2" style="paint-order:stroke">CAMHENCO</text></g>
</svg>
<div id="right" class="a"></div>
<div class="a" style="left:1595px;top:64px;width:301px;height:1px;background:#2a2a38"></div>
<svg class="a" style="left:1609px;top:88px" width="12" height="10" viewBox="0 0 12 10"><path d="M0.5 0.5 H11.5 L6 9.5 Z" fill="#00e5ff"/></svg>
<div class="hdr" style="left:1633px;top:85px;letter-spacing:2.9px">TYPOGRAPHIE</div>
<div class="a" style="left:1607px;top:106px;width:280px;height:1px;background:#2a2a38"></div>
<div class="lab c" style="top:128px;font-size:14px">Police</div>
<div class="inp" style="left:1691px;top:119px;width:196px;height:32px"></div>
<div class="t" style="left:1704px;top:128px;font-size:14px;color:#e0e0ec">Orbitron</div>
<div class="chev" style="left:1873px;top:130px;width:6px;height:6px"></div>
<div class="lab c" style="top:169px;font-size:14px">Taille</div>
<div class="a" style="left:1692px;top:171px;width:117px;height:9px;background:#3c3c3c;border:1px solid #8a8a8a;border-radius:5px"></div>
<div class="a" style="left:1692px;top:171px;width:16px;height:9px;background:#00e5ff;border-radius:5px 0 0 5px"></div>
<div class="a" style="left:1700.5px;top:168px;width:15px;height:15px;background:#00e5ff;border-radius:50%"></div>
<div class="inp" style="left:1818px;top:161px;width:51px;height:29px"></div>
<div class="t" style="left:1829px;top:170px;font-size:12px;font-weight:bold;color:#e0e0ec">20</div>
<div class="t c gray" style="left:1878px;top:171px;font-size:10px;color:#55556a">px</div>
<div class="lab c" style="top:210px;font-size:14px">Graisse</div>
<div class="inp" style="left:1691px;top:201px;width:196px;height:32px"></div>
<div class="t" style="left:1704px;top:210px;font-size:14px;color:#e0e0ec">Bold</div>
<div class="chev" style="left:1873px;top:212px;width:6px;height:6px"></div>
<div class="lab c" style="top:252px;font-size:14px">Couleur</div>
<div class="inp" style="left:1691px;top:243px;width:32px;height:32px"></div>
<div class="a" style="left:1694px;top:247px;width:26px;height:24px;background:#00f0ff;border:1px solid #9a9a9a"></div>
<div class="t" style="left:1738px;top:251px;font-size:14px;color:#6e6e84">&#8634;</div>
<div class="lab c" style="top:295px;font-size:14px">Espacement</div>
<div class="inp" style="left:1691px;top:285px;width:50px;height:32px"></div>
<div class="t" style="left:1702px;top:295px;font-size:13px;color:#e0e0ec">1</div>
<div class="t c" style="left:1749px;top:297px;font-size:10px;color:#55556a">px</div>
<div class="lab c" style="top:337px;font-size:14px">Casse</div>
<div class="inp" style="left:1691px;top:328px;width:196px;height:32px"></div>
<div class="t" style="left:1704px;top:337px;font-size:14px;color:#e0e0ec">Aa normal</div>
<div class="chev" style="left:1873px;top:339px;width:6px;height:6px"></div>
<div class="lab c" style="top:379px;font-size:14px">Contour</div>
<div class="inp" style="left:1691px;top:370px;width:32px;height:32px"></div>
<div class="a" style="left:1694px;top:375px;width:26px;height:22px;background:#000;border:1px solid #9a9a9a"></div>
<div class="a" style="left:1731px;top:382px;width:86px;height:8px;background:#3c3c3c;border:1px solid #8a8a8a;border-radius:5px"></div>
<div class="a" style="left:1731.5px;top:378.5px;width:15px;height:15px;background:#00e5ff;border-radius:50%"></div>
<div class="t c" style="left:1836px;top:381px;font-size:10px;color:#55556a">0px</div>
<div class="lab c" style="top:437px;font-size:14px">Position</div>
<svg class="a" style="left:1690px;top:415px" width="64" height="58" viewBox="0 0 64 58">
<g stroke="#6e6e84" stroke-width="1" fill="none">
<path d="M3 5 L7 9 M3 5 V7 M3 5 H5"/>
<path d="M30 3 V10 M28.5 4.5 L30 3 L31.5 4.5"/>
<path d="M56 9 L60 5 M60 5 H58 M60 5 V7"/>
<path d="M2 28.5 H9 M3.5 27 L2 28.5 L3.5 30"/>
<path d="M53 28.5 H60 M58.5 27 L60 28.5 L58.5 30"/>
<path d="M3 53 L7 49 M3 53 V51 M3 53 H5"/>
<path d="M30 46 V53 M28.5 51.5 L30 53 L31.5 51.5"/>
<path d="M56 49 L60 53 M60 53 H58 M60 53 V51"/>
</g></svg>
<div class="a" style="left:1717px;top:434px;width:24px;height:20px;background:#00e5ff;border-radius:5px"></div>
<div class="a" style="left:1720px;top:441px;width:6px;height:5px;border:1px solid #5a8a9a;border-radius:50%"></div>
<div class="a" style="left:1595px;top:498px;width:301px;height:1px;background:#2a2a38"></div>
<svg class="a" style="left:1609px;top:522px" width="12" height="10" viewBox="0 0 12 10"><path d="M0.5 0.5 H11.5 L6 9.5 Z" fill="#00e5ff"/></svg>
<div class="hdr" style="left:1633px;top:519px;letter-spacing:2.9px">ANIMATION</div>
<div class="a" style="left:1607px;top:540px;width:280px;height:1px;background:#2a2a38"></div>
<div class="lab c" style="top:562px;font-size:14px">Effet</div>
<div class="inp" style="left:1691px;top:553px;width:196px;height:32px"></div>
<div class="t" style="left:1704px;top:562px;font-size:14px;color:#e0e0ec">&#8593; Slide Up</div>
<div class="chev" style="left:1873px;top:564px;width:6px;height:6px"></div>
<div class="lab c" style="top:605px;font-size:14px">Étape</div>
<div class="inp" style="left:1691px;top:595px;width:50px;height:32px"></div>
<div class="t" style="left:1702px;top:604px;font-size:14px;color:#e0e0ec">5</div>
<div class="t c" style="left:1752px;top:606px;font-size:10px;color:#55556a">0=visible</div>
<div class="lab c" style="top:648px;font-size:14px">Durée</div>
<div class="inp" style="left:1691px;top:638px;width:60px;height:32px"></div>
<div class="t c" style="left:1701px;top:647px;font-size:14px;color:#e0e0ec">600</div>
<div class="t c" style="left:1759px;top:650px;font-size:10px;color:#55556a">ms</div>
<div class="lab c" style="top:686px;font-size:14px">Son</div>
<div class="a" style="left:1691px;top:684px;width:98px;height:18px;background:#7a7a7a;border-radius:3px"></div>
<div class="t" style="left:1698px;top:687px;font-size:11px;font-weight:bold;color:#fff;transform:scaleX(.93);transform-origin:left">Choisir un fichier</div>
<div class="t" style="left:1793px;top:687px;font-size:12px;color:#6e6e84">A...</div>
<svg class="a" style="left:1826px;top:686px" width="12" height="13" viewBox="0 0 12 13"><path d="M1 1 V12 L11 6.5 Z" fill="#6e6e84"/></svg>
<svg class="a" style="left:1860px;top:687px" width="12" height="12" viewBox="0 0 12 12"><path d="M1 1 L11 11 M11 1 L1 11" stroke="#6e6e84" stroke-width="1.2"/></svg>
<div class="a" style="left:1595px;top:726px;width:301px;height:1px;background:#2a2a38"></div>
<svg class="a" style="left:1609px;top:750px" width="12" height="10" viewBox="0 0 12 10"><path d="M0.5 0.5 H11.5 L6 9.5 Z" fill="#00e5ff"/></svg>
<div class="hdr" style="left:1633px;top:747px;letter-spacing:2.9px">TEXTE</div>
<div class="a" style="left:1607px;top:768px;width:280px;height:1px;background:#2a2a38"></div>
<div class="inp" style="left:1607px;top:781px;width:280px;height:67px;border-radius:7px"></div>
<div class="t c" style="left:1618px;top:790px;font-size:14px;color:#e0e0ec">Texte</div>
<svg class="a" style="left:1876px;top:838px" width="8" height="8" viewBox="0 0 8 8"><path d="M1 7 L7 1 M4 7 L7 4" stroke="#8a8a9a" stroke-width="1"/></svg>

<div id="status" class="a"></div>
<div class="t c gray" style="left:10px;top:884px;font-size:13px">66%</div>
<div class="t c" style="left:58px;top:883px;font-size:14px;color:#00e5ff;-webkit-text-stroke:.3px #00e5ff">Grid</div>
<div class="t c" style="left:112px;top:883px;font-size:14px;color:#00e5ff;-webkit-text-stroke:.3px #00e5ff">Snap</div>
<div class="t" style="left:971px;top:883px;font-size:14px;color:#00e5ff;transform:scaleX(.88);transform-origin:left top">Sélection</div>
<div class="t c gray" style="left:1848px;top:884px;font-size:13px">1899, 629</div>


<div class="a" style="left:965px;top:272px;width:609px;height:296px;background:#f0f0f0;border-radius:7px;box-shadow:0 2px 12px rgba(0,0,0,.5);overflow:hidden;font-family:'Liberation Sans',sans-serif">
 <div class="a" style="left:0;top:0;width:609px;height:30px;background:#f3f3f3"></div>
 <svg class="a" style="left:8px;top:6px" width="16" height="16" viewBox="0 0 16 16"><circle cx="8" cy="8" r="7.5" fill="#dd4b39"/><path d="M8 8 L1.3 4.3 A7.5 7.5 0 0 0 8 15.5 Z" fill="#1da462"/><path d="M8 8 L8 15.5 A7.5 7.5 0 0 0 14.7 4.3 Z" fill="#ffcd46"/><circle cx="8" cy="8" r="3.6" fill="#fff"/><circle cx="8" cy="8" r="2.8" fill="#4c8bf5"/><circle cx="11.8" cy="4" r="3" fill="#4a5560"/></svg>
 <div class="t" style="left:30px;top:9px;font-size:12px;color:#8a8a8a">Ouvrir</div>
 <svg class="a" style="left:587px;top:7px" width="12" height="12" viewBox="0 0 12 12"><path d="M1 1 L11 11 M11 1 L1 11" stroke="#555" stroke-width="1"/></svg>
 <div class="a" style="left:0;top:30px;width:609px;height:55px;background:#fff"></div>
 <svg class="a" style="left:14px;top:49px" width="14" height="14" viewBox="0 0 14 14"><path d="M13 7 H1.5 M7 1.5 L1.5 7 L7 12.5" fill="none" stroke="#333" stroke-width="1.1"/></svg>
 <svg class="a" style="left:49px;top:49px" width="14" height="14" viewBox="0 0 14 14"><path d="M1 7 H12.5 M7 1.5 L12.5 7 L7 12.5" fill="none" stroke="#999" stroke-width="1.1"/></svg>
 <svg class="a" style="left:80px;top:53px" width="12" height="8" viewBox="0 0 12 8"><path d="M1 1.5 L6 6.5 L11 1.5" fill="none" stroke="#333" stroke-width="1"/></svg>
 <svg class="a" style="left:109px;top:50px" width="14" height="14" viewBox="0 0 14 14"><path d="M7 13.5 V1.5 M1.5 7 L7 1.5 L12.5 7" fill="none" stroke="#333" stroke-width="1.1"/></svg>
 <div class="a" style="left:137px;top:40px;width:246px;height:34px;background:#fff;border:1px solid #d4d4d4"></div>
 <svg class="a" style="left:146px;top:49px" width="17" height="14" viewBox="0 0 17 14"><path d="M0.5 2 Q0.5 0.5 2 0.5 H6 L8 2.5 H15 Q16.5 2.5 16.5 4 V12 Q16.5 13.5 15 13.5 H2 Q0.5 13.5 0.5 12 Z" fill="#f8c840"/><path d="M0.5 4.5 H16.5 V12 Q16.5 13.5 15 13.5 H2 Q0.5 13.5 0.5 12 Z" fill="#ffdf70"/></svg>
 <div class="t" style="left:167px;top:50px;font-size:11px;color:#222">&#171;</div>
 <div class="t" style="left:183px;top:51px;font-size:12px;color:#1a1a1a">overlay</div>
 <svg class="a" style="left:229px;top:53px" width="6" height="9" viewBox="0 0 6 9"><path d="M1 1 L5 4.5 L1 8" fill="none" stroke="#555" stroke-width="1"/></svg>
 <div class="t" style="left:244px;top:51px;font-size:12px;color:#1a1a1a">son</div>
 <svg class="a" style="left:326px;top:53px" width="10" height="7" viewBox="0 0 10 7"><path d="M1 1 L5 5.5 L9 1" fill="none" stroke="#555" stroke-width="1"/></svg>
 <svg class="a" style="left:358px;top:50px" width="13" height="13" viewBox="0 0 13 13"><path d="M11.5 6.5 A5 5 0 1 1 9.5 2.5" fill="none" stroke="#555" stroke-width="1.1"/><path d="M8.5 0.5 L11 2.5 L8.5 4.5" fill="none" stroke="#555" stroke-width="1.1"/></svg>
 <div class="a" style="left:395px;top:40px;width:202px;height:34px;background:#fff;border:1px solid #d4d4d4"></div>
 <div class="t" style="left:404px;top:51px;font-size:12px;color:#6a6a6a">Rechercher dans : son</div>
 <svg class="a" style="left:570px;top:50px" width="12" height="12" viewBox="0 0 12 12"><circle cx="7.5" cy="4.5" r="3.5" fill="none" stroke="#444" stroke-width="1.1"/><path d="M5 7 L1 11" stroke="#444" stroke-width="1.3"/></svg>
 <div class="a" style="left:0;top:85px;width:609px;height:31px;background:#f3f5f8"></div>
 <div class="t" style="left:18px;top:94px;font-size:12px;color:#1a2a5a">Organiser</div>
 <svg class="a" style="left:74px;top:97px" width="8" height="5" viewBox="0 0 8 5"><path d="M0 0 H8 L4 5 Z" fill="#1a2a4a"/></svg>
 <div class="t" style="left:113px;top:94px;font-size:12px;color:#1a2a5a">Nouveau dossier</div>
 <svg class="a" style="left:488px;top:94px" width="13" height="11" viewBox="0 0 13 11"><path d="M0 1 H13 M0 4 H13 M0 7 H13 M0 10 H13" stroke="#111" stroke-width="1.2"/></svg>
 <svg class="a" style="left:512px;top:97px" width="8" height="5" viewBox="0 0 8 5"><path d="M0 0 H8 L4 5 Z" fill="#1a2a4a"/></svg>
 <svg class="a" style="left:543px;top:94px" width="14" height="12" viewBox="0 0 14 12"><rect x="0.75" y="0.75" width="12.5" height="10.5" fill="#fff" stroke="#111" stroke-width="1.4"/><rect x="8" y="1.5" width="4.5" height="9" fill="#1a8ae0"/></svg>
 <svg class="a" style="left:578px;top:92px" width="16" height="16" viewBox="0 0 16 16"><circle cx="8" cy="8" r="8" fill="#1a7ad8"/><text x="8" y="12" text-anchor="middle" font-family="Liberation Sans" font-weight="bold" font-size="11" fill="#fff">?</text></svg>
 <div class="a" style="left:0;top:116px;width:140px;height:100px;background:#fff"></div>
 <div class="a" style="left:140px;top:116px;width:16px;height:100px;background:#f3f3f3"></div>
 <div class="a" style="left:147px;top:162px;width:2px;height:17px;background:#666"></div>
 <div class="a" style="left:156px;top:116px;width:453px;height:84px;background:#fff;border-left:1px solid #e8e8e8"></div>
 <div class="a" style="left:156px;top:200px;width:453px;height:16px;background:#f0f0f0"></div>
 <div class="a" style="left:177px;top:207px;width:297px;height:2px;background:#777"></div>
 <svg class="a" style="left:35px;top:124px" width="15" height="16" viewBox="0 0 15 16"><rect x="0" y="0" width="15" height="16" rx="1.5" fill="#9a4ae0"/><path d="M5 4.5 L11 8 L5 11.5 Z" fill="#fff"/><g fill="#3a1a6a"><rect x="1" y="2" width="1.5" height="1.5"/><rect x="1" y="7" width="1.5" height="1.5"/><rect x="1" y="12" width="1.5" height="1.5"/><rect x="12.5" y="2" width="1.5" height="1.5"/><rect x="12.5" y="7" width="1.5" height="1.5"/><rect x="12.5" y="12" width="1.5" height="1.5"/></g></svg>
 <div class="t" style="left:55px;top:127px;font-size:12px;color:#111">Vidéos</div>
 <svg class="a" style="left:125px;top:126px" width="11" height="11" viewBox="0 0 11 11"><path d="M6 0.5 L10.5 5 L8.5 5.5 L6.5 7.5 L6.5 9.5 L1.5 4.5 L3.5 4.5 L5.5 2.5 Z" fill="#777"/><path d="M3.5 7.5 L0.5 10.5" stroke="#777" stroke-width="1.2"/></svg>
 <div class="a" style="left:2px;top:148px;width:137px;height:32px;background:#d9d9d9;border:1px solid #a0a0a0"></div>
 <svg class="a" style="left:34px;top:157px" width="17" height="14" viewBox="0 0 17 14"><path d="M0.5 2 Q0.5 0.5 2 0.5 H6 L8 2.5 H15 Q16.5 2.5 16.5 4 V12 Q16.5 13.5 15 13.5 H2 Q0.5 13.5 0.5 12 Z" fill="#f8c840"/><path d="M0.5 4.5 H16.5 V12 Q16.5 13.5 15 13.5 H2 Q0.5 13.5 0.5 12 Z" fill="#ffdf70"/></svg>
 <div class="t" style="left:55px;top:158px;font-size:12px;color:#111">son</div>
 <svg class="a" style="left:34px;top:189px" width="17" height="14" viewBox="0 0 17 14"><path d="M0.5 2 Q0.5 0.5 2 0.5 H6 L8 2.5 H15 Q16.5 2.5 16.5 4 V12 Q16.5 13.5 15 13.5 H2 Q0.5 13.5 0.5 12 Z" fill="#f8c840"/><path d="M0.5 4.5 H16.5 V12 Q16.5 13.5 15 13.5 H2 Q0.5 13.5 0.5 12 Z" fill="#ffdf70"/></svg>
 <div class="t" style="left:55px;top:190px;font-size:12px;color:#111">best of big mic</div>
 <svg class="a" style="left:247px;top:116px" width="10" height="6" viewBox="0 0 10 6"><path d="M1 5 L5 1 L9 5" fill="none" stroke="#555" stroke-width="1"/></svg>
 <div class="t" style="left:190px;top:124px;font-size:12px;color:#4a4a7a">Nom</div>
 <div class="a" style="left:319px;top:116px;width:1px;height:25px;background:#e5e5e5"></div>
 <div class="t" style="left:326px;top:124px;font-size:12px;color:#4a4a7a">N°</div>
 <div class="a" style="left:359px;top:116px;width:1px;height:25px;background:#e5e5e5"></div>
 <div class="t" style="left:366px;top:124px;font-size:12px;color:#4a4a7a">Titre</div>
 <div class="a" style="left:519px;top:116px;width:1px;height:25px;background:#e5e5e5"></div>
 <div class="t" style="left:526px;top:124px;font-size:12px;color:#4a4a7a">Interprètes ayant</div>
 <div class="a" style="left:174px;top:147px;width:440px;height:24px;background:#d9d9d9;border:1px solid #a0a0a0"></div>
 <svg class="a" style="left:180px;top:151px" width="13" height="17" viewBox="0 0 13 17"><path d="M0.5 0.5 H9 L12.5 4 V16.5 H0.5 Z" fill="#fff" stroke="#999"/><circle cx="6" cy="9.5" r="4" fill="#222"/><circle cx="6" cy="9.5" r="4" fill="none" stroke="#e05020" stroke-width="1"/><path d="M5 7.5 L8 9.5 L5 11.5 Z" fill="#fff"/></svg>
 <div class="t" style="left:198px;top:154px;font-size:12px;color:#111">sonette</div>
 <div class="t" style="left:130px;top:231px;font-size:12px;color:#111">Nom du fichier :</div>
 <div class="a" style="left:221px;top:225px;width:171px;height:24px;background:#fff;border:1px solid #7a7a7a;border-radius:2px"></div>
 <div class="t" style="left:225px;top:232px;font-size:12px;color:#111">sonette</div>
 <svg class="a" style="left:373px;top:234px" width="10" height="7" viewBox="0 0 10 7"><path d="M1 1 L5 5.5 L9 1" fill="none" stroke="#333" stroke-width="1"/></svg>
 <div class="a" style="left:404px;top:225px;width:188px;height:23px;background:#fdfdfd;border:1px solid #d0d0d0;border-radius:2px"></div>
 <div class="t" style="left:408px;top:231px;font-size:12px;color:#111">Fichiers audio</div>
 <svg class="a" style="left:577px;top:233px" width="10" height="7" viewBox="0 0 10 7"><path d="M1 1 L5 5.5 L9 1" fill="none" stroke="#333" stroke-width="1"/></svg>
 <div class="a" style="left:405px;top:255px;width:86px;height:23px;background:#fdfdfd;border:1px solid #d0d0d0;border-radius:4px"></div>
 <div class="t" style="left:405px;top:261px;width:86px;text-align:center;font-size:12px;color:#111">Ouvrir</div>
 <div class="a" style="left:505px;top:255px;width:86px;height:23px;background:#fdfdfd;border:1px solid #d0d0d0;border-radius:4px"></div>
 <div class="t" style="left:505px;top:261px;width:86px;text-align:center;font-size:12px;color:#111">Annuler</div>
</div>
</body></html>
